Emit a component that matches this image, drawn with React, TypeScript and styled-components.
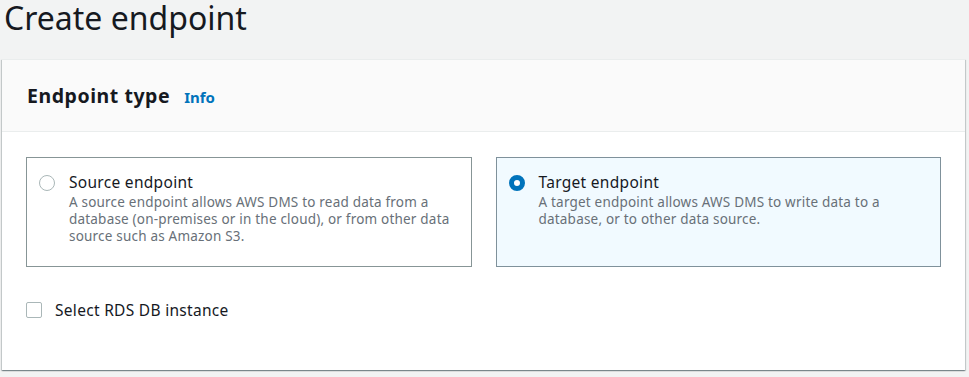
import React from "react";
import styled, { createGlobalStyle } from "styled-components";

const GlobalStyle = createGlobalStyle`
  html, body {
    margin: 0;
    padding: 0;
    background: #f2f3f3;
    font-family: "Noto Sans", "Liberation Sans", sans-serif;
    color: #16191f;
  }
`;

const Page = styled.div`
  padding: 0 4px 0 2px;
  height: 377px;
  overflow: hidden;
`;

const Title = styled.h1`
  margin: 0;
  font-size: 32px;
  font-weight: 400;
  line-height: 38px;
  margin-top: -1px;
  padding: 0 0 22px 2px;
  color: #16191f;
`;

const Card = styled.section`
  background: #fff;
  border-top: 1px solid #eaeded;
  box-shadow: 0 1px 1px 0 rgba(0, 28, 36, 0.3), 1px 1px 1px 0 rgba(0, 28, 36, 0.15),
    -1px 1px 1px 0 rgba(0, 28, 36, 0.15);
`;

const CardHeader = styled.div`
  display: flex;
  align-items: center;
  gap: 14px;
  height: 72px;
  padding: 0 24px 0 25px;
  box-sizing: border-box;
  background: #fafafa;
  border-bottom: 1px solid #eaeded;
`;

const HeaderTitle = styled.h2`
  margin: 0;
  font-size: 19.5px;
  letter-spacing: 0.55px;
  font-weight: 700;
  color: #16191f;
`;

const InfoLink = styled.a`
  font-size: 15px;
  font-weight: 700;
  color: #0073bb;
  text-decoration: none;
  margin-top: 2px;
`;

const CardBody = styled.div`
  padding: 25px 24px 49px;
`;

const Tiles = styled.div`
  display: grid;
  grid-template-columns: 1fr 1fr;
  gap: 24px;
`;

const Tile = styled.label<{ $selected?: boolean }>`
  display: flex;
  gap: 14px;
  min-height: 110px;
  box-sizing: border-box;
  padding: 13px 12px;
  border: 1px solid ${(p) => (p.$selected ? "#7f919b" : "#879596")};
  background: ${(p) => (p.$selected ? "#f1faff" : "#fff")};
  cursor: pointer;
`;

const Radio = styled.span<{ $checked?: boolean }>`
  flex: none;
  width: 16px;
  height: 16px;
  margin-top: 4px;
  border-radius: 50%;
  box-sizing: border-box;
  border: ${(p) => (p.$checked ? "5px solid #0073bb" : "1px solid #aab7b8")};
  background: #fff;
`;

const TileText = styled.div`
  display: flex;
  flex-direction: column;
`;

const TileLabel = styled.span`
  font-size: 15.5px;
  letter-spacing: 0.3px;
  line-height: 23px;
  color: #16191f;
`;

const TileDesc = styled.span`
  font-size: 13.5px;
  letter-spacing: 0.2px;
  line-height: 17px;
  color: #687078;
`;

const CheckRow = styled.label`
  display: flex;
  align-items: center;
  gap: 13px;
  margin-top: 32px;
  font-size: 15.5px;
  letter-spacing: 0.3px;
  color: #16191f;
`;

const Checkbox = styled.span`
  width: 16px;
  height: 16px;
  box-sizing: border-box;
  border: 1px solid #aab7b8;
  border-radius: 2px;
  background: #fff;
`;

const tiles = [
  {
    label: "Source endpoint",
    desc: "A source endpoint allows AWS DMS to read data from a database (on-premises or in the cloud), or from other data source such as Amazon S3.",
    selected: false,
  },
  {
    label: "Target endpoint",
    desc: "A target endpoint allows AWS DMS to write data to a database, or to other data source.",
    selected: true,
  },
];

export default function App() {
  return (
    <>
      <GlobalStyle />
      <Page>
        <Title>Create endpoint</Title>
        <Card>
          <CardHeader>
            <HeaderTitle>Endpoint type</HeaderTitle>
            <InfoLink href="#">Info</InfoLink>
          </CardHeader>
          <CardBody>
            <Tiles>
              {tiles.map((t) => (
                <Tile key={t.label} $selected={t.selected}>
                  <Radio $checked={t.selected} />
                  <TileText>
                    <TileLabel>{t.label}</TileLabel>
                    <TileDesc>{t.desc}</TileDesc>
                  </TileText>
                </Tile>
              ))}
            </Tiles>
            <CheckRow>
              <Checkbox />
              Select RDS DB instance
            </CheckRow>
          </CardBody>
        </Card>
      </Page>
    </>
  );
}
